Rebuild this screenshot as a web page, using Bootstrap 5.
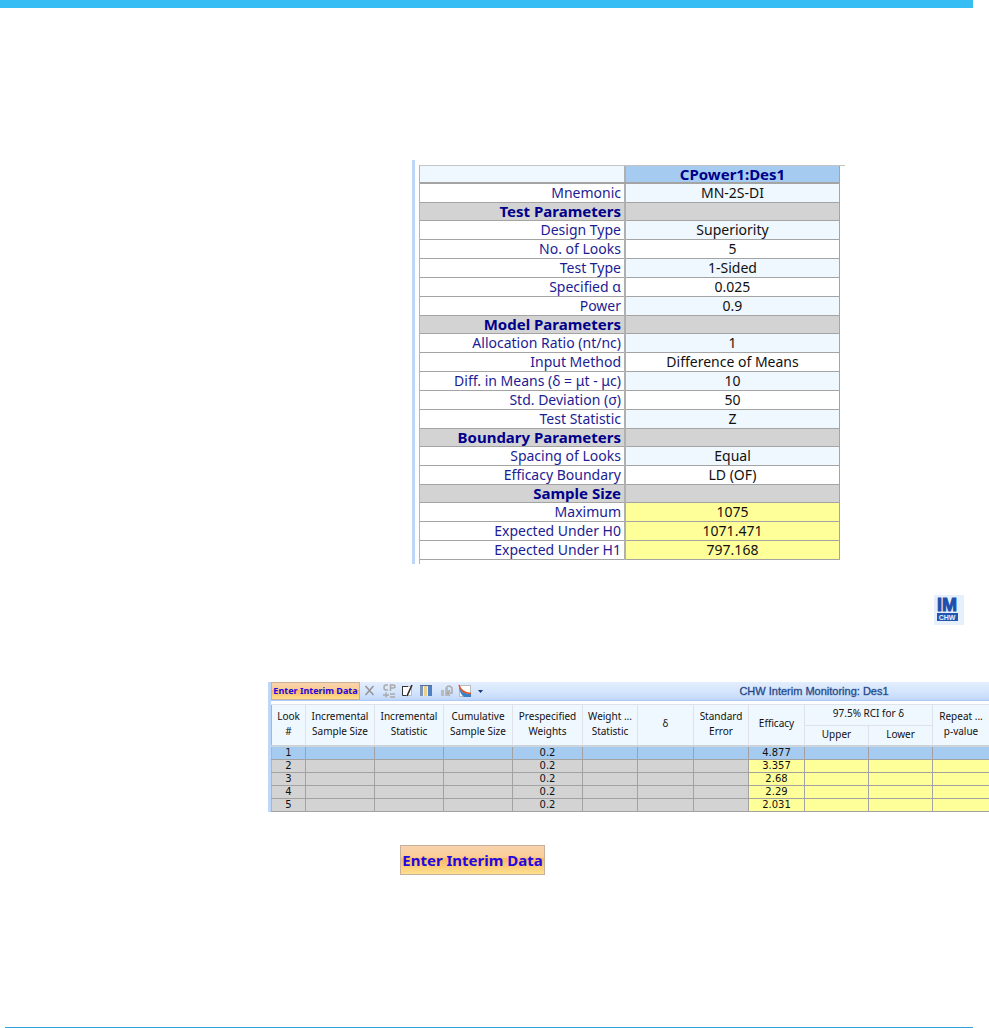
<!DOCTYPE html>
<html lang="en">
<head>
<meta charset="utf-8">
<meta name="viewport" content="width=device-width, initial-scale=1">
<title>CHW Interim Monitoring</title>
<link rel="stylesheet" href="https://cdn.jsdelivr.net/npm/bootstrap@5.3.0/dist/css/bootstrap.min.css">
<style>
  body { font-family: "Noto Sans", "Open Sans", sans-serif; color: #111; background: #fff; overflow-x: hidden; }
  .page-band { height: 8px; background: #35bdf4; margin-right: 16px; }
  .page-foot { border-top: 1px solid #2e9fd8; margin: 152px 16px 0 5px; }

  /* design summary */
  .design-fig { width: 433px; margin: 152px 0 0 412px; border-left: 3px solid #bdd7fb; padding: 5px 0 0 4px; }
  .design-wrap { border-top: 1px solid #c4c4c4; border-left: 1px solid #b4b4b4; padding-bottom: 4px; }
  .design-grid { width: 420px; table-layout: fixed; font-size: 14px; line-height: 15px; border-collapse: collapse; }
  .design-grid th, .design-grid td { height: 19px; padding: 0 3px; border: 1px solid #a4a4a4; border-left: 0; vertical-align: middle; white-space: nowrap; }
  .design-grid thead th { height: 17px; border-top: 0; border-bottom: 2px solid #a4a4a4; background: #eff7ff; }
  .design-grid th { text-align: right; color: #1c1c93; font-weight: 400; }
  .design-grid th[scope=row] { border-right: 2px solid #b0b0b0; }
  .design-grid td { text-align: center; }
  .design-grid thead .des-name { background: #a6cbf0; color: #00008b; font-size: 15px; font-weight: 700; text-align: center; }
  .design-grid .group th, .design-grid .group td { height: 18px; background: #d3d3d3; color: #00008b; font-size: 15px; font-weight: 700; }
  .tint { background: #eff7ff; }
  .calc { background: #ffff99; }

  .monitor-icon { width: 30px; height: 30px; margin: 31px 25px 0 0; background: #e6f0fd; }

  /* monitoring sheet */
  .monitor { margin: 57px 0 0 268px; border-left: 3px solid #bdd7fb; }
  .monitor-bar { height: 19px; background: linear-gradient(#e3eefe, #d5e5fc 50%, #c4dafb 90%, #a6c6f4); }
  .monitor-bar .tool { border: 0; padding: 0; background: none; height: 16px; line-height: 0; }
  .monitor-tools { width: 218px; flex: none; }
  .monitor-title { font: 400 11px/19px "Liberation Sans", sans-serif; color: #1c4587; padding-left: 150px; -webkit-text-stroke: 1px rgba(28, 69, 135, .3); }
  .enter-btn { border: 1px solid #c9b09a; border-radius: 0; color: #2408e0; font-weight: 700; white-space: nowrap;
    background: linear-gradient(#f8d3ae, #fbcd95 40%, #fbb866 45%, #fde08e); }
  .enter-sm { font-size: 9px; line-height: 14px; width: 89px; height: 18px; padding: 0; }
  .enter-lg { font-size: 15px; width: 145px; height: 30px; line-height: 26px; padding: 0; margin: 33px 0 0 400px; }

  .looks { width: 100%; margin-top: 3px; table-layout: fixed; border-collapse: collapse; font-size: 10px; text-align: center; }
  .looks th { font-weight: 400; background: #eff7ff; border: 1px solid #dfe3e8; padding: 0 0 2px; line-height: 15px; height: 21px; white-space: nowrap; }
  .looks thead { border-top: 1px solid #c8c8c8; border-bottom: 2px solid #cdd3da; }
  .looks td { height: 13px; padding: 0; font-family: "DejaVu Sans", sans-serif; line-height: 11px; border: 1px solid #a2a2a2; background: #d3d3d3; }
  .looks td:first-child, .looks th:first-child { border-left-color: #b4b4b4; }
  .looks tbody td.calc { background: #ffff99; }
  .looks tbody tr.current td { background: #a6cbf0; }
</style>
</head>
<body>
<div class="page-band"></div>

<main>
  <div class="design-fig">
    <div class="design-wrap">
      <table class="design-grid">
        <colgroup><col style="width:205px"><col></colgroup>
        <thead><tr><th scope="row"></th><th scope="col" class="des-name">CPower1:Des1</th></tr></thead>
        <tbody>
          <tr><th scope="row">Mnemonic</th><td class="tint">MN-2S-DI</td></tr>
          <tr class="group"><th scope="row">Test Parameters</th><td></td></tr>
          <tr><th scope="row">Design Type</th><td class="tint">Superiority</td></tr>
          <tr><th scope="row">No. of Looks</th><td>5</td></tr>
          <tr><th scope="row">Test Type</th><td class="tint">1-Sided</td></tr>
          <tr><th scope="row">Specified α</th><td>0.025</td></tr>
          <tr><th scope="row">Power</th><td class="tint">0.9</td></tr>
          <tr class="group"><th scope="row">Model Parameters</th><td></td></tr>
          <tr><th scope="row">Allocation Ratio (nt/nc)</th><td class="tint">1</td></tr>
          <tr><th scope="row">Input Method</th><td>Difference of Means</td></tr>
          <tr><th scope="row">Diff. in Means (δ = μt - μc)</th><td class="tint">10</td></tr>
          <tr><th scope="row">Std. Deviation (σ)</th><td>50</td></tr>
          <tr><th scope="row">Test Statistic</th><td class="tint">Z</td></tr>
          <tr class="group"><th scope="row">Boundary Parameters</th><td></td></tr>
          <tr><th scope="row">Spacing of Looks</th><td class="tint">Equal</td></tr>
          <tr><th scope="row">Efficacy Boundary</th><td>LD (OF)</td></tr>
          <tr class="group"><th scope="row">Sample Size</th><td></td></tr>
          <tr><th scope="row">Maximum</th><td class="calc">1075</td></tr>
          <tr><th scope="row">Expected Under H0</th><td class="calc">1071.471</td></tr>
          <tr><th scope="row">Expected Under H1</th><td class="calc">797.168</td></tr>
        </tbody>
      </table>
    </div>
  </div>

  <div class="d-flex justify-content-end">
    <button type="button" class="monitor-icon border-0 p-0 d-block" aria-label="CHW interim monitoring">
      <svg width="30" height="30" viewBox="0 0 30 30" class="d-block">
        <rect x="3" y="18" width="21" height="8" fill="#2355b3"/>
        <text x="3" y="16" font-family="Liberation Sans, sans-serif" font-weight="700" font-size="18" fill="#1f4ead" stroke="#1f4ead">IM</text>
        <text x="13" y="25" text-anchor="middle" font-family="Liberation Sans, sans-serif" font-weight="700" font-size="7" fill="#e6f0fd">CHW</text>
      </svg>
    </button>
  </div>

  <section class="monitor">
    <div class="monitor-bar d-flex align-items-center">
      <div class="monitor-tools d-flex align-items-center">
        <button type="button" class="enter-btn enter-sm">Enter Interim Data</button>
        <button type="button" class="tool ms-1" aria-label="Delete"><svg width="14" height="16" viewBox="0 0 14 16"><path d="M1.500 3l8 9M9.500 3l-8 9" stroke="#949494" stroke-width="1.500" fill="none"/></svg></button>
        <button type="button" class="tool ms-1" aria-label="Conditional power"><svg width="16" height="16" viewBox="0 0 16 16"><g fill="none" stroke="#aaa" stroke-width="1.500"><path d="M6 2H4Q2 2 2 4.500T4 7H6M8.500 8V2H11Q13 2 13 3.500T11 5H9"/><path d="M1 12h6M4 9.500v5M8 11h5M8 14h5"/></g></svg></button>
        <button type="button" class="tool ms-1" aria-label="Edit"><svg width="14" height="16" viewBox="0 0 14 16"><path d="M.5 3.500h9v9H.5z" fill="#fff" stroke="#bbb"/><path d="M.5 3v9.500H4M0 3.500h6" stroke="#333" fill="none"/><path d="M10 2L5 13" stroke="#222" stroke-width="1.500"/></svg></button>
        <button type="button" class="tool ms-1" aria-label="Columns"><svg width="12" height="16" viewBox="0 0 12 16"><path d="M0 2h12v11H0z" fill="#f3efd8"/><path d="M0 2h3v11H0z" fill="#7e95bb"/><path d="M4 2h3v11H4z" fill="#e9d18b"/><path d="M8 2h4v11H8z" fill="#4d80c4"/><path d="M0 2.500h12" stroke="#54719d"/></svg></button>
        <button type="button" class="tool ms-2" aria-label="Export"><svg width="14" height="16" viewBox="0 0 14 16"><path d="M1 7h3v6H1zM5 5h3v8H5z" fill="#bbb"/><path d="M6 5Q9 1 12 5v5H8M10 7l-3 3 3 3" fill="none" stroke="#aaa" stroke-width="1.500"/></svg></button>
        <button type="button" class="tool ms-1" aria-label="Charts"><svg width="15" height="16" viewBox="0 0 15 16"><path d="M1.500 2.500h11v11h-11z" fill="#fff" stroke="#bbb"/><path d="M1 3Q3 10 13 11v3H6Q1 10 1 3z" fill="#3c80c8"/><path d="M1 2Q3 10 13 10.500" fill="none" stroke="#e2572b" stroke-width="1.500"/></svg></button>
        <button type="button" class="tool ms-1" aria-label="More charts"><svg width="6" height="16" viewBox="0 0 6 16"><path d="M1 7h5L3.500 10z" fill="#173a78"/></svg></button>
      </div>
      <div class="monitor-title flex-grow-1 text-center">CHW Interim Monitoring: Des1</div>
    </div>
    <table class="looks">
      <colgroup>
        <col style="width:34px"><col style="width:69px"><col style="width:69px"><col style="width:69px"><col style="width:70px"><col style="width:55px"><col style="width:56px"><col style="width:55px"><col style="width:56px"><col style="width:64px"><col style="width:64px"><col style="width:57px">
      </colgroup>
      <thead>
        <tr><th rowspan="2">Look<br>#</th><th rowspan="2">Incremental<br>Sample Size</th><th rowspan="2">Incremental<br>Statistic</th><th rowspan="2">Cumulative<br>Sample Size</th><th rowspan="2">Prespecified<br>Weights</th><th rowspan="2">Weight ...<br>Statistic</th><th rowspan="2">δ</th><th rowspan="2">Standard<br>Error</th><th rowspan="2">Efficacy</th><th colspan="2">97.5% RCI for δ</th><th rowspan="2">Repeat ...<br>p-value</th></tr>
        <tr><th>Upper</th><th>Lower</th></tr>
      </thead>
      <tbody>
        <tr class="current"><td>1</td><td></td><td></td><td></td><td>0.2</td><td></td><td></td><td></td><td>4.877</td><td></td><td></td><td></td></tr>
        <tr><td>2</td><td></td><td></td><td></td><td>0.2</td><td></td><td></td><td></td><td class="calc">3.357</td><td class="calc"></td><td class="calc"></td><td class="calc"></td></tr>
        <tr><td>3</td><td></td><td></td><td></td><td>0.2</td><td></td><td></td><td></td><td class="calc">2.68</td><td class="calc"></td><td class="calc"></td><td class="calc"></td></tr>
        <tr><td>4</td><td></td><td></td><td></td><td>0.2</td><td></td><td></td><td></td><td class="calc">2.29</td><td class="calc"></td><td class="calc"></td><td class="calc"></td></tr>
        <tr><td>5</td><td></td><td></td><td></td><td>0.2</td><td></td><td></td><td></td><td class="calc">2.031</td><td class="calc"></td><td class="calc"></td><td class="calc"></td></tr>
      </tbody>
    </table>
  </section>

  <button type="button" class="enter-btn enter-lg d-block">Enter Interim Data</button>
</main>

<footer class="page-foot"></footer>
<script src="https://cdn.jsdelivr.net/npm/bootstrap@5.3.0/dist/js/bootstrap.bundle.min.js"></script>
</body>
</html>
